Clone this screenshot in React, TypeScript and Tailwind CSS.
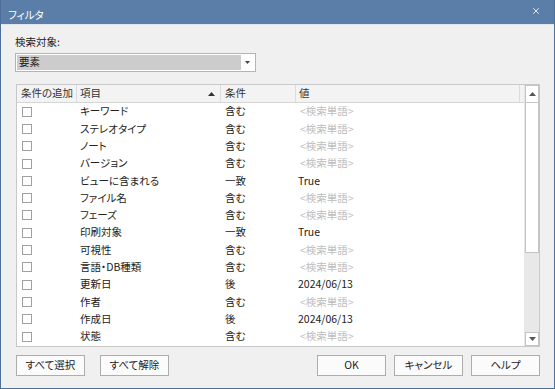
import { X } from "lucide-react";

const rows: [string, string, string | null][] = [
  ["キーワード", "含む", null],
  ["ステレオタイプ", "含む", null],
  ["ノート", "含む", null],
  ["バージョン", "含む", null],
  ["ビューに含まれる", "一致", "True"],
  ["ファイル名", "含む", null],
  ["フェーズ", "含む", null],
  ["印刷対象", "一致", "True"],
  ["可視性", "含む", null],
  ["言語・DB種類", "含む", null],
  ["更新日", "後", "2024/06/13"],
  ["作者", "含む", null],
  ["作成日", "後", "2024/06/13"],
  ["状態", "含む", null],
];

const btn =
  "h-[21px] w-[69px] border border-[#adadad] bg-[#fbfbfb] text-[10.5px] text-[#222] flex items-center justify-center";
const headCell = "h-full flex items-center border-r border-[#dcdcdc] text-[#333]";

export default function App() {
  return (
    <div className="w-[555px] h-[389px] flex flex-col bg-[#f0f0f0] border border-t-0 border-[#4d709b] font-['Noto_Sans_CJK_JP',sans-serif] [font-feature-settings:'palt'] leading-none select-none">
      {/* title bar */}
      <div className="h-[24px] bg-[#5a7ea8] flex items-center justify-between pl-[7px] pr-[13px] shrink-0">
        <span className="text-white text-[10.5px] mt-[6px]">フィルタ</span>
        <X className="w-[10px] h-[10px] text-white mb-[2px]" strokeWidth={2} />
      </div>
      <div className="h-px bg-[#dde4ec] shrink-0" />

      <div className="flex-1 flex flex-col px-[14px]">
        <div className="mt-[10px] text-[10.5px] text-[#222] h-[15px] flex items-center">検索対象:</div>

        {/* combobox */}
        <div className="mt-[3px] w-[241px] h-[19px] border border-[#b4b4b4] bg-white flex items-stretch p-px">
          <div className="flex-1 bg-[#cccccc] text-[10.5px] text-[#111] flex items-center pl-[2px]">要素</div>
          <div className="w-[13px] flex items-center justify-center">
            <svg width="5" height="3" viewBox="0 0 5 3">
              <path d="M0 0h5L2.5 3z" fill="#444" />
            </svg>
          </div>
        </div>

        {/* list */}
        <div className="mt-[12px] ml-px w-[524px] h-[263px] border border-[#c8c8c8] bg-white flex overflow-hidden">
          <div className="flex-1 flex flex-col">
            <div className="h-[18px] bg-[#f3f3f3] border-b border-[#d5d5d5] flex text-[10.5px] shrink-0">
              <div className={`${headCell} w-[60px] pl-[4px]`}>条件の追加</div>
              <div className={`${headCell} w-[144px] pl-[3px] justify-between pr-[5px]`}>
                <span>項目</span>
                <svg width="7" height="4" viewBox="0 0 7 4">
                  <path d="M0 4h7L3.5 0z" fill="#333" />
                </svg>
              </div>
              <div className={`${headCell} w-[75px] pl-[4px]`}>条件</div>
              <div className={`${headCell} w-[224px] pl-[3px]`}>値</div>
              <div className="flex-1" />
            </div>
            {rows.map(([item, cond, val]) => (
              <div key={item} className="h-[17.3px] flex items-center text-[10.5px] text-[#222] shrink-0">
                <div className="w-[60px] pl-[5px] flex items-center">
                  <div className="w-[10px] h-[10px] border border-[#a0a0a0] bg-white" />
                </div>
                <div className="w-[144px] pl-[3px]">{item}</div>
                <div className="w-[75px] pl-[4px]">{cond}</div>
                <div className="pl-[2px]">
                  {val ? (
                    <span>{val}</span>
                  ) : (
                    <span className="text-[#bdbdbd] pl-[2px]">&lt;検索単語&gt;</span>
                  )}
                </div>
              </div>
            ))}
          </div>

          {/* scrollbar */}
          <div className="w-[15px] flex flex-col border-l border-[#e6e6e6] bg-[#e8e8e8]">
            <div className="h-[18px] bg-white border border-[#c4c4c4] flex items-center justify-center shrink-0">
              <svg width="7" height="4" viewBox="0 0 7 4">
                <path d="M0 4h7L3.5 0z" fill="#555" />
              </svg>
            </div>
            <div className="h-[150px] bg-white border-x border-b border-[#c4c4c4] shrink-0" />
            <div className="flex-1" />
            <div className="h-[14px] bg-white border border-[#c4c4c4] flex items-center justify-center shrink-0">
              <svg width="7" height="4" viewBox="0 0 7 4">
                <path d="M0 0h7L3.5 4z" fill="#555" />
              </svg>
            </div>
          </div>
        </div>

        {/* buttons */}
        <div className="mt-[8px] flex items-center ml-px w-[524px]">
          <div className={btn}>すべて選択</div>
          <div className={`${btn} ml-[15px]`}>すべて解除</div>
          <div className="flex-1" />
          <div className={`${btn} border-[#3d77b3]`}>OK</div>
          <div className={`${btn} ml-[8px]`}>キャンセル</div>
          <div className={`${btn} ml-[8px]`}>ヘルプ</div>
        </div>
      </div>
    </div>
  );
}
